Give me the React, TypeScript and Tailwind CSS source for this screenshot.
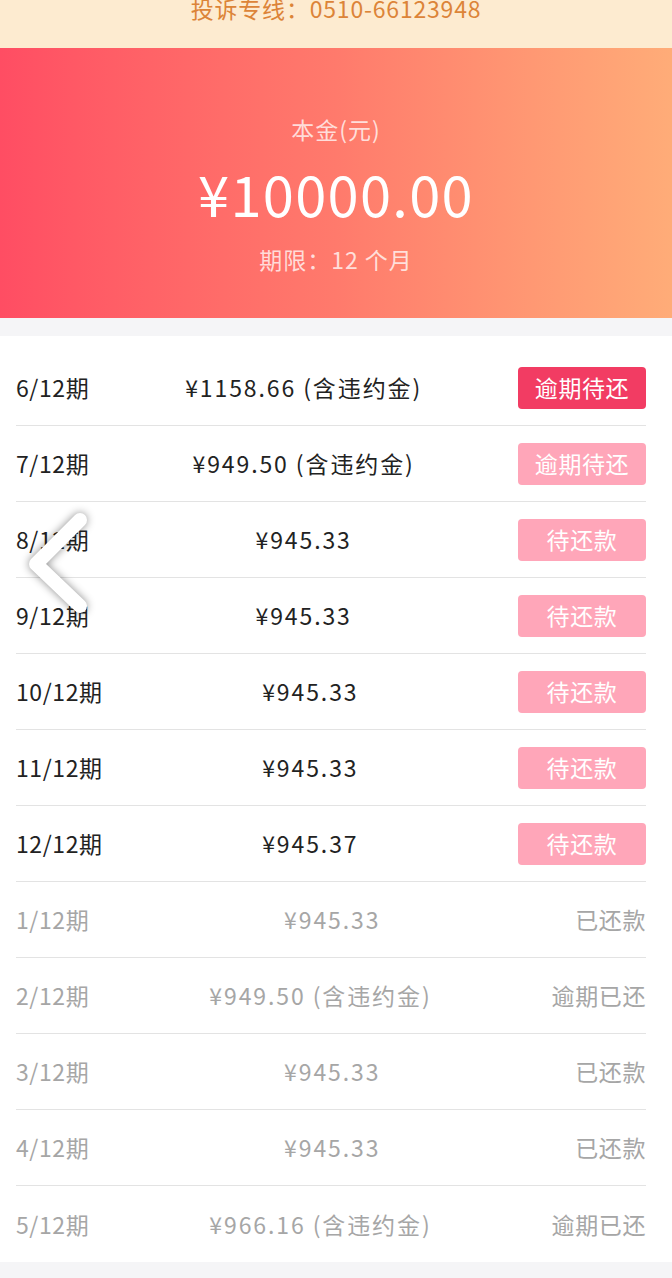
import React from 'react'

type Row = {
  period: string
  amount: string
  status: string
  kind: 'overdue' | 'overdueSoft' | 'pending' | 'paid'
}

const rows: Row[] = [
  { period: '6/12期', amount: '¥1158.66 (含违约金)', status: '逾期待还', kind: 'overdue' },
  { period: '7/12期', amount: '¥949.50 (含违约金)', status: '逾期待还', kind: 'overdueSoft' },
  { period: '8/12期', amount: '¥945.33', status: '待还款', kind: 'pending' },
  { period: '9/12期', amount: '¥945.33', status: '待还款', kind: 'pending' },
  { period: '10/12期', amount: '¥945.33', status: '待还款', kind: 'pending' },
  { period: '11/12期', amount: '¥945.33', status: '待还款', kind: 'pending' },
  { period: '12/12期', amount: '¥945.37', status: '待还款', kind: 'pending' },
  { period: '1/12期', amount: '¥945.33', status: '已还款', kind: 'paid' },
  { period: '2/12期', amount: '¥949.50 (含违约金)', status: '逾期已还', kind: 'paid' },
  { period: '3/12期', amount: '¥945.33', status: '已还款', kind: 'paid' },
  { period: '4/12期', amount: '¥945.33', status: '已还款', kind: 'paid' },
  { period: '5/12期', amount: '¥966.16 (含违约金)', status: '逾期已还', kind: 'paid' },
]

function Status({ row }: { row: Row }) {
  if (row.kind === 'paid') {
    return <span className="text-[#a6a6a6]">{row.status}</span>
  }
  const bg = row.kind === 'overdue' ? 'bg-[#f23c63]' : 'bg-[#ffa6b9]'
  return (
    <span className={`flex h-[42px] w-[128px] items-center justify-center rounded-[4px] text-white ${bg}`}>
      {row.status}
    </span>
  )
}

export default function App() {
  return (
    <div
      className="relative min-h-[1278px] bg-[#f5f5f7]"
      style={{ fontFamily: '"Noto Sans CJK SC", "Noto Sans", sans-serif' }}
    >
      {/* complaint hotline strip */}
      <div className="h-[48px] overflow-hidden bg-[#fdebd0]">
        <p className="-mt-[7px] text-center text-[23px] leading-[30px] tracking-[0.8px] text-[#dc8438]">投诉专线：0510-66123948</p>
      </div>

      {/* principal header */}
      <div className="flex h-[270px] flex-col items-center bg-linear-to-r from-[#ff4d63] via-[#ff7a6c] to-[#ffac78] pt-[66px] text-white">
        <p className="text-[23px] leading-[30px] tracking-[1px] text-white/75">本金(元)</p>
        <p className="mt-[19px] text-[56px] leading-[60px] tracking-[1.3px]">¥10000.00</p>
        <p className="mt-[21px] text-[23px] leading-[30px] tracking-[1px] text-white/75">期限：12 个月</p>
      </div>

      <div className="mt-[18px] bg-white pl-4 pr-[26px] pt-[14px]">
        {rows.map((row, i) => (
          <div
            key={row.period}
            className={`flex h-[76px] items-center text-[23px] tracking-[0.6px] ${i < rows.length - 1 ? 'border-b border-[#e3e3e3]' : ''} ${
              row.kind === 'paid' ? 'text-[#a6a6a6]' : 'text-[#222]'
            }`}
          >
            <span>{row.period}</span>
            <span className="flex-1 text-center tracking-[1.9px]">{row.amount}</span>
            <Status row={row} />
          </div>
        ))}
      </div>

      {/* back gesture chevron */}
      <svg
        className="absolute left-[22px] top-[506px] h-[110px] w-[76px]"
        viewBox="0 0 76 110"
        style={{ filter: 'drop-shadow(0 0 4px rgba(0,0,0,0.45))' }}
      >
        <polyline points="58,14 14,58 58,100" fill="none" stroke="#fff" strokeWidth="14" strokeLinecap="round" strokeLinejoin="round" />
      </svg>
    </div>
  )
}
